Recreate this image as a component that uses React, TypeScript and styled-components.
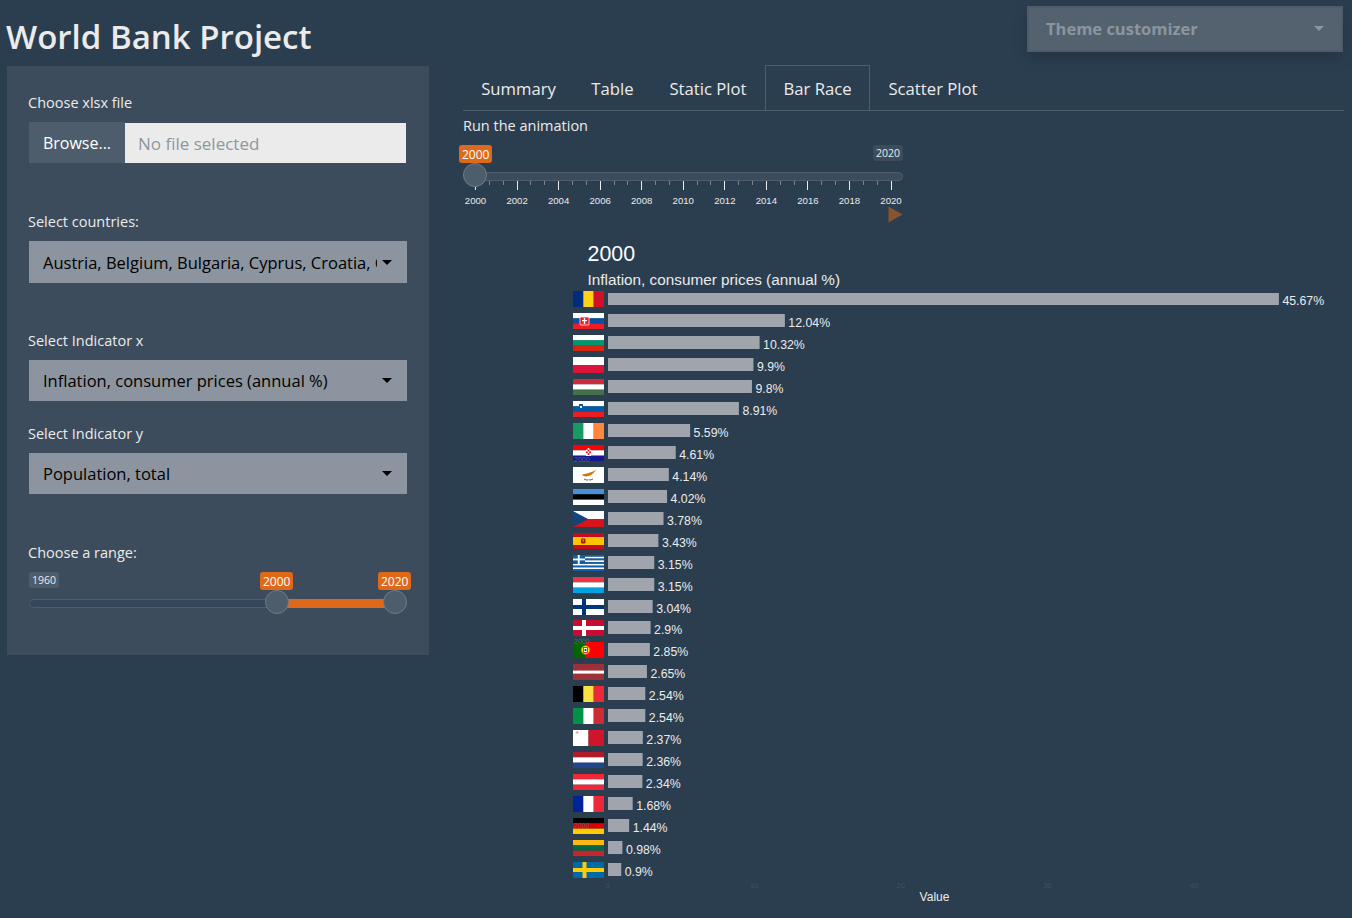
import React from "react";
import styled, { createGlobalStyle } from "styled-components";

const UI_FONT = `"Open Sans", "Noto Sans", sans-serif`;
const CHART_FONT = `"Liberation Sans", Arial, sans-serif`;

const Global = createGlobalStyle`
  html, body { margin: 0; padding: 0; background: #2b3e50; }
  body { font-family: ${UI_FONT}; color: #ebebeb; }
  * { box-sizing: border-box; }
`;

const Page = styled.div`
  position: relative;
  width: 1352px;
  height: 918px;
  overflow: hidden;
  background: #2b3e50;
`;

const Title = styled.h1`
  margin: 0;
  height: 66px;
  padding: 14px 0 0 6px;
  font-size: 33px;
  line-height: 46px;
  font-weight: 600;
  color: #ebebeb;
`;

const Customizer = styled.div`
  position: absolute;
  top: 6px;
  right: 9px;
  width: 316px;
  height: 46px;
  display: flex;
  align-items: center;
  justify-content: space-between;
  padding: 0 17px 2px 17px;
  background: #54626f;
  border: 2px solid #4e5c69;
  box-shadow: 0 6px 14px rgba(0, 0, 0, 0.18);
  color: #8b95a0;
  font-size: 16.5px;
  font-weight: 700;
`;

const Caret = styled.span<{ $color?: string; $w?: number }>`
  width: 0;
  height: 0;
  flex: none;
  border-left: ${(p) => p.$w ?? 5}px solid transparent;
  border-right: ${(p) => p.$w ?? 5}px solid transparent;
  border-top: ${(p) => p.$w ?? 5}px solid ${(p) => p.$color ?? "#000"};
`;

const Layout = styled.div`
  display: grid;
  grid-template-columns: 422px 881px;
  column-gap: 34px;
  padding-left: 7px;
  align-items: start;
`;

const Sidebar = styled.aside`
  height: 589px;
  background: #3c4c5d;
  padding: 27px 22px 0;
  display: flex;
  flex-direction: column;
`;

const FieldLabel = styled.label<{ $top?: number; $gap?: number }>`
  display: block;
  height: 20px;
  margin-top: ${(p) => p.$top ?? 0}px;
  margin-bottom: ${(p) => p.$gap ?? 10}px;
  margin-left: -1px;
  font-size: 14.5px;
  line-height: 20px;
  color: #ebebeb;
  white-space: nowrap;
`;

const FileRow = styled.div`
  display: flex;
  width: 377px;
  height: 41px;
`;

const BrowseButton = styled.div`
  width: 96px;
  background: #4e5d6c;
  color: #fff;
  font-size: 16px;
  display: flex;
  align-items: center;
  justify-content: center;
`;

const FileName = styled.div`
  flex: 1;
  margin-top: 1px;
  background: #ebebeb;
  color: #8e97a0;
  font-size: 17px;
  padding-left: 13px;
  display: flex;
  align-items: center;
`;

const SelectBox = styled.div<{ $h?: number }>`
  width: 378px;
  height: ${(p) => p.$h ?? 41}px;
  background: #8c959f;
  color: #000;
  padding: 0 15px 0 14px;
  display: flex;
  align-items: center;
  justify-content: space-between;
  font-size: 16.5px;
`;

const SelectText = styled.span`
  width: 334px;
  overflow: hidden;
  white-space: nowrap;
`;

const SliderBox = styled.div<{ $w: number; $h: number }>`
  position: relative;
  width: ${(p) => p.$w}px;
  height: ${(p) => p.$h}px;
`;

const Track = styled.div<{ $top: number; $bg: string }>`
  position: absolute;
  left: 0;
  right: 0;
  top: ${(p) => p.$top}px;
  height: 9px;
  border-radius: 5px;
  background: ${(p) => p.$bg};
  border: 1px solid #4e5d6c;
`;

const TrackFill = styled.div<{ $top: number }>`
  position: absolute;
  top: ${(p) => p.$top}px;
  height: 9px;
  background: #df691a;
`;

const Handle = styled.div<{ $top: number }>`
  position: absolute;
  top: ${(p) => p.$top}px;
  width: 24px;
  height: 24px;
  margin-left: -12px;
  border-radius: 50%;
  background: #4e5d6c;
  border: 1px solid #6f7b87;
`;

const Bubble = styled.span<{ $active?: boolean; $bg?: string; $top: number }>`
  position: absolute;
  top: ${(p) => p.$top}px;
  padding: ${(p) => (p.$active ? "3px 3px 1px" : "1px 3px")};
  border-radius: 3px;
  background: ${(p) => (p.$active ? "#df691a" : p.$bg ?? "#4e5d6c")};
  color: ${(p) => (p.$active ? "#fff" : "#ebebeb")};
  font-size: ${(p) => (p.$active ? 12 : 10.5)}px;
  line-height: 14px;
  white-space: nowrap;
`;

const TickLayer = styled.svg`
  position: absolute;
  left: 0;
  top: 0;
  font-family: ${CHART_FONT};
`;

const PlayIcon = styled.svg`
  position: absolute;
  left: 425px;
  top: 69px;
`;

const Main = styled.main`
  margin-top: -1px;
`;

const TabBar = styled.nav`
  display: flex;
  height: 46px;
  border-bottom: 1px solid #4e5d6c;
`;

const Tab = styled.div<{ $active?: boolean; $w: number }>`
  width: ${(p) => p.$w}px;
  height: 45px;
  display: flex;
  align-items: center;
  justify-content: center;
  font-size: 16.7px;
  color: #ebebeb;
  white-space: nowrap;
  border: 1px solid ${(p) => (p.$active ? "#4e5d6c" : "transparent")};
  border-bottom: none;
`;

const RunLabel = styled.div`
  height: 21px;
  margin-top: 5px;
  font-size: 14.5px;
  line-height: 20px;
  color: #ebebeb;
`;

const ChartSvg = styled.svg`
  display: block;
  font-family: ${CHART_FONT};
`;

type FlagProps = { y: number };
const W = 31;
const H = 16;

const HBands = ({ c }: { c: string[] }) => (
  <>
    {c.map((col, i) => (
      <rect key={i} x={0} y={(i * H) / c.length} width={W} height={H / c.length + 0.02} fill={col} />
    ))}
  </>
);
const VBands = ({ c }: { c: string[] }) => (
  <>
    {c.map((col, i) => (
      <rect key={i} x={(i * W) / c.length} y={0} width={W / c.length + 0.02} height={H} fill={col} />
    ))}
  </>
);
const Nordic = ({ bg, fg }: { bg: string; fg: string }) => (
  <>
    <rect width={W} height={H} fill={bg} />
    <rect x={9} width={4} height={H} fill={fg} />
    <rect y={6} width={W} height={4} fill={fg} />
  </>
);

const flags: Record<string, React.ReactNode> = {
  ro: <VBands c={["#002b7f", "#fcd116", "#ce1126"]} />,
  sk: (
    <>
      <HBands c={["#fff", "#0b4ea2", "#ee1c25"]} />
      <rect x={7} y={4} width={9} height={8} rx={1} fill="#ee1c25" stroke="#fff" strokeWidth={0.7} />
      <rect x={10.8} y={5} width={1.4} height={6} fill="#fff" />
      <rect x={9} y={7} width={5} height={1.2} fill="#fff" />
    </>
  ),
  bg: <HBands c={["#fff", "#00966e", "#d62612"]} />,
  pl: <HBands c={["#fff", "#dc143c"]} />,
  hu: <HBands c={["#cd2a3e", "#fff", "#436f4d"]} />,
  si: (
    <>
      <HBands c={["#fff", "#005da4", "#ed1c24"]} />
      <rect x={6} y={3} width={4} height={5} fill="#005da4" />
      <rect x={7} y={5} width={2} height={2} fill="#fff" />
    </>
  ),
  ie: <VBands c={["#169b62", "#fff", "#ff883e"]} />,
  hr: (
    <>
      <HBands c={["#f00", "#fff", "#171796"]} />
      <rect x={13} y={3} width={5} height={8} fill="#fff" />
      <rect x={13} y={3} width={1.7} height={1.7} fill="#f00" />
      <rect x={16.3} y={3} width={1.7} height={1.7} fill="#f00" />
      <rect x={14.7} y={4.7} width={1.7} height={1.7} fill="#f00" />
      <rect x={13} y={6.4} width={1.7} height={1.7} fill="#f00" />
      <rect x={16.3} y={6.4} width={1.7} height={1.7} fill="#f00" />
      <rect x={14.7} y={8.1} width={1.7} height={1.7} fill="#f00" />
    </>
  ),
  cy: (
    <>
      <rect width={W} height={H} fill="#fff" />
      <path d="M9 7.5 L14 6.5 L17 5.5 L20 4.5 L23.5 2.5 L20.5 6 L17.5 8.5 L13 9.5 L10.5 9 Z" fill="#d57800" />
      <path d="M11 12 Q15.5 14 15.2 12.5 M20 12 Q16 14 16 12.5" stroke="#4e5b31" strokeWidth={0.9} fill="none" />
    </>
  ),
  ee: <HBands c={["#4891d9", "#000", "#fff"]} />,
  cz: (
    <>
      <HBands c={["#fff", "#d7141a"]} />
      <path d="M0 0 L15 8 L0 16 Z" fill="#11457e" />
    </>
  ),
  es: (
    <>
      <rect width={W} height={H} fill="#c60b1e" />
      <rect y={4} width={W} height={8} fill="#ffc400" />
      <rect x={8} y={5.5} width={4.5} height={5} rx={1.2} fill="#ad1519" />
      <rect x={9.5} y={6.5} width={1.6} height={2} fill="#c8a000" />
    </>
  ),
  gr: (
    <>
      <HBands c={["#0d5eaf", "#fff", "#0d5eaf", "#fff", "#0d5eaf", "#fff", "#0d5eaf", "#fff", "#0d5eaf"]} />
      <rect width={12} height={8.9} fill="#0d5eaf" />
      <rect x={4.8} width={1.9} height={8.9} fill="#fff" />
      <rect y={3.55} width={12} height={1.8} fill="#fff" />
    </>
  ),
  lu: <HBands c={["#ef3340", "#fff", "#00a3e0"]} />,
  fi: <Nordic bg="#fff" fg="#003580" />,
  dk: <Nordic bg="#c60c30" fg="#fff" />,
  pt: (
    <>
      <rect width={12.4} height={H} fill="#060" />
      <rect x={12.4} width={18.6} height={H} fill="#f00" />
      <circle cx={12.5} cy={8} r={4.2} fill="#ffe000" stroke="#c8a000" strokeWidth={0.5} />
      <rect x={10.5} y={5.5} width={4} height={5} fill="#fff" stroke="#d22" strokeWidth={0.9} />
      <rect x={11.7} y={7} width={1.6} height={2} fill="#039" />
    </>
  ),
  lv: (
    <>
      <rect width={W} height={H} fill="#9e3039" />
      <rect y={6.6} width={W} height={3} fill="#fff" />
    </>
  ),
  be: <VBands c={["#000", "#fae042", "#ed2939"]} />,
  it: <VBands c={["#009246", "#fff", "#ce2b37"]} />,
  mt: (
    <>
      <VBands c={["#fff", "#cf142b"]} />
      <rect x={3.6} y={1} width={1} height={3} fill="#c8a6a6" />
      <rect x={2.6} y={2} width={3} height={1} fill="#c8a6a6" />
    </>
  ),
  nl: <HBands c={["#ae1c28", "#fff", "#21468b"]} />,
  at: <HBands c={["#ed2939", "#fff", "#ed2939"]} />,
  fr: <VBands c={["#002395", "#fff", "#ed2939"]} />,
  de: <HBands c={["#000", "#d00", "#ffce00"]} />,
  lt: <HBands c={["#fdb913", "#006a44", "#c1272d"]} />,
  se: (
    <>
      <rect width={W} height={H} fill="#006aa7" />
      <rect x={9.5} width={4} height={H} fill="#fecc00" />
      <rect y={6} width={W} height={4} fill="#fecc00" />
    </>
  ),
};

const Flag = ({ code, y }: FlagProps & { code: string }) => (
  <svg x={573} y={y} width={W} height={H} viewBox={`0 0 ${W} ${H}`}>
    {flags[code]}
  </svg>
);

const rows: [string, number, string][] = [
  ["ro", 45.67, "45.67%"],
  ["sk", 12.04, "12.04%"],
  ["bg", 10.32, "10.32%"],
  ["pl", 9.9, "9.9%"],
  ["hu", 9.8, "9.8%"],
  ["si", 8.91, "8.91%"],
  ["ie", 5.59, "5.59%"],
  ["hr", 4.61, "4.61%"],
  ["cy", 4.14, "4.14%"],
  ["ee", 4.02, "4.02%"],
  ["cz", 3.78, "3.78%"],
  ["es", 3.43, "3.43%"],
  ["gr", 3.15, "3.15%"],
  ["lu", 3.15, "3.15%"],
  ["fi", 3.04, "3.04%"],
  ["dk", 2.9, "2.9%"],
  ["pt", 2.85, "2.85%"],
  ["lv", 2.65, "2.65%"],
  ["be", 2.54, "2.54%"],
  ["it", 2.54, "2.54%"],
  ["mt", 2.37, "2.37%"],
  ["nl", 2.36, "2.36%"],
  ["at", 2.34, "2.34%"],
  ["fr", 1.68, "1.68%"],
  ["de", 1.44, "1.44%"],
  ["lt", 0.98, "0.98%"],
  ["se", 0.9, "0.9%"],
];

const PITCH = 21.95;
const SCALE = 14.69;

const BarChart = () => (
  <ChartSvg width={881} height={683} viewBox="463 235 881 683">
    <text x={587.5} y={261} fontSize={21.4} fill="#fff">2000</text>
    <text x={587.5} y={284.5} fontSize={15.3} fill="#ebebeb">Inflation, consumer prices (annual %)</text>
    {rows.map(([code, v, label], i) => {
      const y = 291.2 + i * PITCH;
      const fy = Math.round(y);
      return (
        <g key={code}>
          <Flag code={code} y={fy} />
          <rect x={608} y={i === 0 ? fy + 2 : fy + 1} width={v * SCALE} height={i === 0 ? 12 : 13} fill="#a0a5ad" />
          <text x={608 + v * SCALE + 3.5} y={y + 14} fontSize={12.3} fill="#ebebeb">{label}</text>
        </g>
      );
    })}
    {[462, 644, 828].map((y) => (
      <text key={y} x={574} y={y} fontSize={7} fill="#55606b">2000</text>
    ))}
    {[0, 10, 20, 30, 40].map((t) => (
      <text key={t} x={607.5 + t * 14.66} y={888} fontSize={7.5} textAnchor="middle" fill="#3f5063">{t}</text>
    ))}
    <text x={934.5} y={901} fontSize={12} textAnchor="middle" fill="#ebebeb">Value</text>
  </ChartSvg>
);

const SliderTicks = () => {
  const major = Array.from({ length: 11 }, (_, i) => 12 + i * 41.55);
  const minor = Array.from({ length: 31 }, (_, i) => 12 + i * 13.85).filter((_, i) => i % 3 !== 0);
  return (
    <TickLayer width={440} height={80}>
      {minor.map((x) => (
        <rect key={x} x={Math.round(x)} y={44} width={1} height={4} fill="#7d8894" />
      ))}
      {major.map((x, i) => (
        <g key={x}>
          <rect x={Math.round(x)} y={44} width={1} height={9} fill="#ebebeb" />
          <text x={x + 0.5} y={67} fontSize={9.6} textAnchor="middle" fill="#ebebeb">{2000 + i * 2}</text>
        </g>
      ))}
    </TickLayer>
  );
};

export default function App() {
  return (
    <Page>
      <Global />
      <Title>World Bank Project</Title>
      <Customizer>
        Theme customizer
        <Caret $color="#8b95a0" $w={5} />
      </Customizer>
      <Layout>
        <Sidebar>
          <FieldLabel $gap={9}>Choose xlsx file</FieldLabel>
          <FileRow>
            <BrowseButton>Browse...</BrowseButton>
            <FileName>No file selected</FileName>
          </FileRow>
          <FieldLabel $top={49} $gap={9}>Select countries:</FieldLabel>
          <SelectBox $h={42}>
            <SelectText>Austria, Belgium, Bulgaria, Cyprus, Croatia, Czechia, Denmark</SelectText>
            <Caret />
          </SelectBox>
          <FieldLabel $top={48} $gap={9}>Select Indicator x</FieldLabel>
          <SelectBox>
            <SelectText>Inflation, consumer prices (annual %)</SelectText>
            <Caret />
          </SelectBox>
          <FieldLabel $top={23} $gap={9}>Select Indicator y</FieldLabel>
          <SelectBox>
            <SelectText>Population, total</SelectText>
            <Caret />
          </SelectBox>
          <FieldLabel $top={49} $gap={0}>Choose a range:</FieldLabel>
          <SliderBox $w={378} $h={60}>
            <Track $top={36} $bg="#33465a" />
            <TrackFill $top={36} style={{ left: 248, width: 118 }} />
            <Handle $top={27} style={{ left: 248 }} />
            <Handle $top={27} style={{ left: 366 }} />
            <Bubble $top={9} style={{ left: 0 }}>1960</Bubble>
            <Bubble $active $top={9} style={{ left: 231 }}>2000</Bubble>
            <Bubble $active $top={9} style={{ left: 349 }}>2020</Bubble>
          </SliderBox>
        </Sidebar>
        <Main>
          <TabBar>
            <Tab $w={111}>Summary</Tab>
            <Tab $w={77}>Table</Tab>
            <Tab $w={114}>Static Plot</Tab>
            <Tab $w={105} $active>Bar Race</Tab>
            <Tab $w={126}>Scatter Plot</Tab>
          </TabBar>
          <RunLabel>Run the animation</RunLabel>
          <SliderBox $w={440} $h={98}>
            <Track $top={35} $bg="#3c4c5d" />
            <SliderTicks />
            <Handle $top={26} style={{ left: 12 }} />
            <Bubble $active $top={8} style={{ left: -4 }}>2000</Bubble>
            <Bubble $bg="#3c4c5d" $top={8} style={{ right: 0 }}>2020</Bubble>
            <PlayIcon width={15} height={17} viewBox="0 0 15 17">
              <path d="M0.5 0.5 L14.5 8.5 L0.5 16.5 Z" fill="#8a5330" />
            </PlayIcon>
          </SliderBox>
          <BarChart />
        </Main>
      </Layout>
    </Page>
  );
}
